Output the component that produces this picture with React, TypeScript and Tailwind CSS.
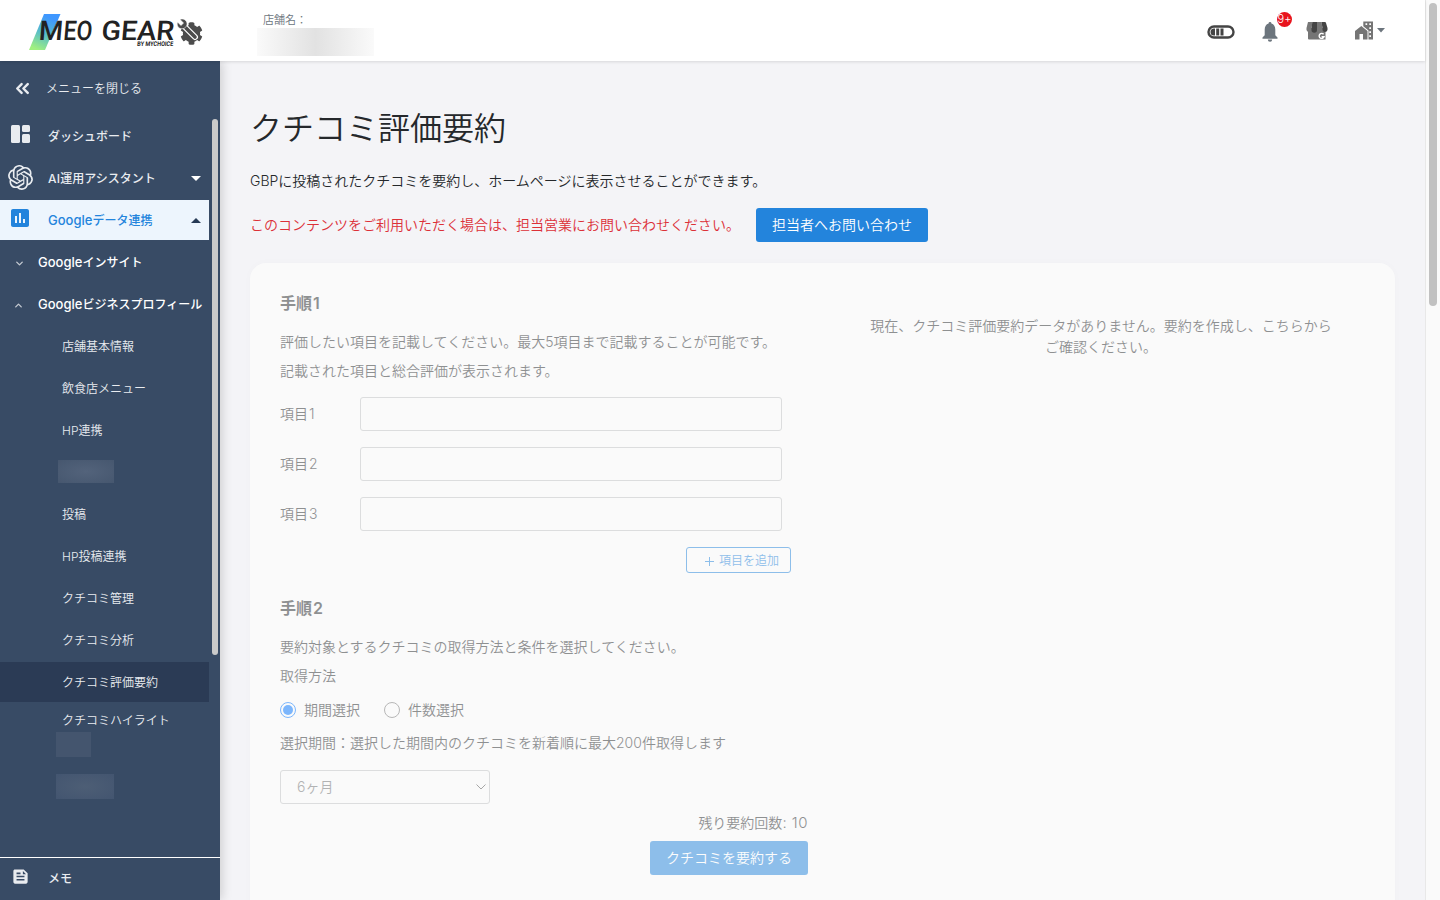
import { MdInsertChart, MdFeed } from 'react-icons/md';
import { FaCog } from 'react-icons/fa';
import { SiOpenai } from 'react-icons/si';
import { ChevronDown, ChevronUp, ChevronsLeft } from 'lucide-react';

const subMenu = [
  { label: '店舗基本情報' },
  { label: '飲食店メニュー' },
  { label: 'HP連携' },
  { label: '' },
  { label: '投稿' },
  { label: 'HP投稿連携' },
  { label: 'クチコミ管理' },
  { label: 'クチコミ分析' },
  { label: 'クチコミ評価要約', active: true },
];

function Logo() {
  return (
    <div className="relative ml-7 h-[38px] w-[178px]">
      <svg width="178" height="38" viewBox="0 0 178 38" className="block">
        <defs>
          <linearGradient id="slash" x1="0.7" y1="0" x2="0.3" y2="1">
            <stop offset="0.1" stopColor="#3f97ff" />
            <stop offset="0.55" stopColor="#58bdc8" />
            <stop offset="1" stopColor="#a0f080" />
          </linearGradient>
        </defs>
        <path d="M16 1h16.500L17 37H1z" fill="url(#slash)" />
        <g fill="#222" fontFamily="Roboto, sans-serif" fontWeight="500" transform="skewX(-5)">
          <text x="12.5" y="27" fontSize="27" textLength="24" lengthAdjust="spacingAndGlyphs">M</text>
          <text x="37" y="27" fontSize="27" textLength="29" lengthAdjust="spacingAndGlyphs">EO</text>
          <text x="75" y="27" fontSize="27" textLength="73" lengthAdjust="spacingAndGlyphs">GEAR</text>
          <text x="112" y="33.5" fontSize="6.5" fontWeight="700" textLength="36" lengthAdjust="spacingAndGlyphs">BY MYCHOICE</text>
        </g>
      </svg>
      <FaCog size={23} className="absolute top-[9px] left-[152px] text-[#4c4c4c]" />
      <svg width="28" height="28" viewBox="0 0 28 28" className="absolute top-[5px] left-[148px]">
        <circle cx="15.500" cy="15.500" r="5.500" fill="#4c4c4c" />
        <path d="M8 8l11 11" stroke="#fff" strokeWidth="6" strokeLinecap="round" />
        <path d="M8 8l11 11" stroke="#4c4c4c" strokeWidth="3.600" strokeLinecap="round" />
        <path d="M4 1.500l3.500 3.500-2.500 2.500L1.500 4C.5 7 2 10.500 5.500 10.700c3 .3 6-2.200 5.500-5.700C10.500 2 7 0 4 1.500z" fill="#4c4c4c" stroke="#fff" strokeWidth=".6" />
      </svg>
    </div>
  );
}

function StoreIcon() {
  return (
    <svg width="22" height="20" viewBox="0 0 22 20">
      <path d="M2 7h17.500v11.500H3a1 1 0 0 1-1-1z" fill="#757575" />
      <path d="M2 1h4.500L5.500 7v2a2.600 2.600 0 0 1-5 0V7z" fill="#777" />
      <path d="M6.300 1H11v8a2.700 2.700 0 0 1-5.500 0V7z" fill="#444" />
      <path d="M11 1h4.500l1 6v2A2.700 2.700 0 0 1 11 9z" fill="#777" />
      <path d="M15.500 1H19q.8 0 1 1L21.500 7v2a2.600 2.600 0 0 1-5 0V7z" fill="#444" />
      <path d="M17.600 13.300a2.500 2.500 0 1 0 .4 2.500h-2.400" fill="none" stroke="#fff" strokeWidth="1.400" />
    </svg>
  );
}

function BellIcon() {
  return (
    <svg width="16" height="20" viewBox="0 0 16 20" fill="#6c757d">
      <path d="M8 0a1.400 1.400 0 0 1 1.400 1.500C12 2.200 13.300 4.500 13.300 7.500v5.700l2.200 2.300v1.200H.5v-1.200l2.200-2.300V7.500c0-3 1.300-5.300 3.900-6A1.400 1.400 0 0 1 8 0zM5.800 17.600h4.400a2.200 2.200 0 0 1-4.400 0z" />
    </svg>
  );
}

function BuildingIcon() {
  return (
    <svg width="19" height="19" viewBox="0 0 19 19" fill="#757575">
      <path d="M0 18.500V10l6.300-5 6.200 5v8.500H8v-5.500H4.500v5.500z" />
      <path d="M8.300.500H18v18h-4.500V9.500L8.300 5.300z" />
      <path d="M10.500 2.300h1.700v1.700h-1.700zM14.300 2.300H16V4h-1.700zM14.300 6.300H16V8h-1.700zM14.300 10.300H16V12h-1.700zM14.300 14.300H16V16h-1.700z" fill="#fff" />
    </svg>
  );
}

function Header() {
  return (
    <header className="relative z-20 flex h-[61px] shrink-0 items-start bg-white shadow-[0_1px_3px_rgba(0,0,0,0.12)]">
      <div className="w-[257px] pt-[13px]">
        <Logo />
      </div>
      <div className="flex-1 pt-3">
        <p className="pl-1.5 text-[11px] leading-4 text-[#6c757d]">店舗名：</p>
        <div className="h-7 w-[117px] bg-linear-to-r from-[#fafafa] via-[#e2e2e2] to-[#fafafa]" />
      </div>
      <div className="flex h-[61px] items-center pr-10">
        <svg width="28" height="14" viewBox="0 0 28 14" className="mt-[3px] mr-[27px]">
          <rect x="1.500" y="1.500" width="25" height="11" rx="5.500" fill="none" stroke="#444" strokeWidth="2.400" />
          <path d="M8 3.500v7H7a3.500 3.500 0 0 1 0-7zM9.200 3.500h3v7h-3zM13.500 3.500h3v7h-3z" fill="#444" />
        </svg>
        <div className="relative mt-[3px] mr-7">
          <BellIcon />
          <span className="absolute -top-[10px] left-[15px] flex size-[15px] items-center justify-center rounded-full bg-[#e8131d] text-[11px] leading-none text-white">9+</span>
        </div>
        <div className="mr-[27px]">
          <StoreIcon />
        </div>
        <BuildingIcon />
        <svg width="8" height="5" viewBox="0 0 8 5" className="ml-[3px]">
          <path d="M0 0h8L4 4.500z" fill="#6c757d" />
        </svg>
      </div>
    </header>
  );
}

function Sidebar() {
  return (
    <aside className="relative z-10 flex w-[220px] shrink-0 flex-col bg-[#384b65] text-xs text-[#e9ecf0] shadow-[2px_0_10px_rgba(0,0,0,0.16)]">
      <div className="flex h-[55px] shrink-0 items-center pl-3">
        <ChevronsLeft size={21} strokeWidth={2.8} />
        <span className="ml-[13px]">メニューを閉じる</span>
      </div>
      <div className="flex min-h-0 flex-1">
        <nav className="flex w-[209px] shrink-0 flex-col gap-0.5">
          <div className="flex h-10 shrink-0 items-center pl-[11px] font-medium">
            <svg width="19" height="18" viewBox="0 0 19 18" fill="currentColor" className="mb-1">
              <rect width="9" height="18" rx="1.500" />
              <rect x="11" width="8" height="7" rx="1.500" />
              <rect x="11" y="9" width="8" height="9" rx="1.500" />
            </svg>
            <span className="ml-[18px] pt-0.5">ダッシュボード</span>
          </div>
          <div className="flex h-10 shrink-0 items-center pr-2 pl-2 font-medium">
            <SiOpenai size={25} className="mb-0.5" />
            <span className="ml-[15px] flex-1 pt-0.5"><span className="tracking-[0.2px]">AI</span>運用アシスタント</span>
            <svg width="10" height="5"><path d="M0 0h10L5 5z" fill="#fff" /></svg>
          </div>
          <div className="flex h-10 shrink-0 items-center bg-[#edf5fd] pr-2 pl-[9px] font-medium text-[#2384dc]">
            <MdInsertChart size={24} className="mb-1 -ml-px" />
            <span className="ml-4 flex-1 pt-0.5"><span className="text-[13px] leading-none">Google</span>データ連携</span>
            <svg width="10" height="5"><path d="M0 5h10L5 0z" fill="#263a55" /></svg>
          </div>
          <div className="flex h-10 shrink-0 items-center pl-[14px] font-medium text-white">
            <ChevronDown size={11} strokeWidth={3} className="mt-0.5 opacity-70" />
            <span className="ml-[13px] pt-0.5"><span className="text-[13px] leading-none">Google</span>インサイト</span>
          </div>
          <div className="flex h-10 shrink-0 items-center pl-[13px] font-medium whitespace-nowrap text-white">
            <ChevronUp size={11} strokeWidth={3} className="mt-0.5 opacity-70" />
            <span className="ml-[14px] pt-0.5"><span className="text-[13px] leading-none">Google</span>ビジネスプロフィール</span>
          </div>
          {subMenu.map((item, i) => (
            <div key={i} className={`flex h-10 shrink-0 items-center pl-[62px] ${item.active ? 'bg-[#2b3b55]' : ''}`}>
              {item.label ? <span className="pt-0.5">{item.label}</span> : <span className="-mt-px -ml-1 h-[23px] w-14 bg-radial from-[#53637b] to-[#46576f]" />}
            </div>
          ))}
          <div className="h-[68px] shrink-0 pt-[9px]">
            <p className="pl-[62px] leading-4">クチコミハイライト</p>
            <div className="mt-[3px] ml-14 h-[25px] w-[35px] bg-[#44556e]" />
          </div>
          <div className="ml-14 h-[25px] w-[58px] shrink-0 bg-radial from-[#4d5e75] to-[#435570]" />
        </nav>
        <div className="mt-[3px] ml-[3px] h-[536px] w-1.5 rounded-full bg-[#cacaca]" />
      </div>
      <div className="flex h-[43px] shrink-0 items-center border-t border-white pl-[11px] font-medium">
        <MdFeed size={19} className="mb-1.5" />
        <span className="ml-[18px]">メモ</span>
      </div>
    </aside>
  );
}

function StepForm() {
  return (
    <div className="w-[528px] shrink-0">
      <h2 className="text-base leading-6 font-semibold">手順<span className="ml-px">1</span></h2>
      <p className="mt-3 leading-[29px]">
        評価したい項目を記載してください。最大5項目まで記載することが可能です。
        <br />
        記載された項目と総合評価が表示されます。
      </p>
      <div className="mt-3 flex flex-col gap-4">
        {[1, 2, 3].map((n) => (
          <label key={n} className="flex items-center">
            <span className="w-20">項目<span className="ml-px">{n}</span></span>
            <input className="h-[34px] w-[422px] rounded-[3px] border border-[#bfc1c3]" />
          </label>
        ))}
      </div>
      <button className="mt-4 ml-[406px] flex h-[26px] w-[105px] items-center rounded-[3px] border border-[#2384dc] pt-0.5 pl-[17px] text-xs whitespace-nowrap text-[#2384dc]">
        <svg width="11" height="11" viewBox="0 0 11 11" className="mr-1">
          <path d="M5.500 1v9M1 5.500h9" stroke="currentColor" />
        </svg>
        項目を追加
      </button>
      <h2 className="mt-[23px] text-base leading-6 font-semibold">手順<span className="ml-px">2</span></h2>
      <p className="mt-3 leading-[29px]">
        要約対象とするクチコミの取得方法と条件を選択してください。
        <br />
        取得方法
      </p>
      <div className="mt-[10px] flex h-5 items-center">
        <span className="flex size-4 items-center justify-center rounded-full border border-[#0075ff]">
          <span className="size-2.5 rounded-full bg-[#0075ff]" />
        </span>
        <span className="ml-2">期間選択</span>
        <span className="ml-6 size-4 rounded-full border border-[#767676]" />
        <span className="ml-2">件数選択</span>
      </div>
      <p className="mt-[13px] leading-5">選択期間：選択した期間内のクチコミを新着順に最大200件取得します</p>
      <div className="mt-[17px] flex h-[34px] w-[210px] items-center justify-between rounded-[3px] border border-[#bfc1c3] pr-[3px] pl-4">
        <span className="text-[#6c6e70]">6ヶ月</span>
        <svg width="10" height="6" viewBox="0 0 10 6" fill="none">
          <path d="M.5.500L5 5 9.500.500" stroke="#555" />
        </svg>
      </div>
      <p className="mt-2 text-right leading-[21px]">残り要約回数<span className="text-[15px] leading-none tracking-[0.5px]">: 10</span></p>
      <button className="mt-2 ml-auto flex h-[34px] w-[158px] items-center justify-center rounded-[3px] bg-[#2384dc] text-white">
        クチコミを要約する
      </button>
    </div>
  );
}

export default function App() {
  return (
    <div className="flex h-[900px] w-[1440px] overflow-hidden bg-[#f4f4f7] font-['Inter','Noto_Sans_CJK_JP',sans-serif] text-sm font-[350] text-[#25282b]">
      <div className="flex w-[1425px] flex-col">
        <Header />
        <div className="flex min-h-0 flex-1">
          <Sidebar />
          <main className="min-w-0 flex-1 px-[30px] pt-11">
            <h1 className="text-[32px] leading-[48px] font-[350]">クチコミ評価要約</h1>
            <p className="mt-[18px] leading-5">GBPに投稿されたクチコミを要約し、ホームページに表示させることができます。</p>
            <div className="mt-[17px] flex items-center">
              <p className="w-[506px] text-[#dc3038]">このコンテンツをご利用いただく場合は、担当営業にお問い合わせください。</p>
              <button className="h-[34px] w-[172px] rounded-[3px] bg-[#2384dc] text-white">担当者へお問い合わせ</button>
            </div>
            <section className="mt-[21px] h-[760px] rounded-2xl bg-[#fafafa] px-[30px] pt-7 shadow-[0_0_10px_rgba(0,0,0,0.02)]">
              <div className="flex opacity-50">
                <StepForm />
                <p className="mt-6 ml-[53px] w-[480px] text-center leading-[21px]">
                  現在、クチコミ評価要約データがありません。要約を作成し、こちらから
                  <br />
                  ご確認ください。
                </p>
              </div>
            </section>
          </main>
        </div>
      </div>
      <div className="flex w-[15px] justify-center border-l border-[#e8e8e8] bg-[#fafafa] pt-[3px]">
        <div className="h-[303px] w-2 rounded-full bg-[#c1c1c1]" />
      </div>
    </div>
  );
}
